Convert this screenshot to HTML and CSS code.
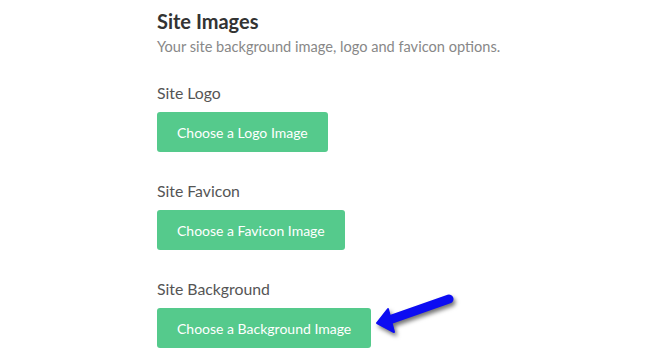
FILE: index.html
```html
<!DOCTYPE html>
<html lang="en">
<head>
    <meta charset="UTF-8">
    <meta name="viewport" content="width=device-width, initial-scale=1.0">
    <title>Site Images</title>
    <link rel="stylesheet" href="styles.css">
</head>
<body>
    <div class="panel">
        <h2>Site Images</h2>
        <p class="intro">Your site background image, logo and favicon options.</p>

        <div class="field">
            <label>Site Logo</label>
            <button class="btn">Choose a Logo Image</button>
        </div>

        <div class="field">
            <label>Site Favicon</label>
            <button class="btn">Choose a Favicon Image</button>
        </div>

        <div class="field">
            <label>Site Background</label>
            <div class="btn-row">
                <button class="btn">Choose a Background Image</button>
                <svg class="pointer" width="90" height="50" viewBox="0 0 90 50">
                    <line x1="22" y1="29" x2="79" y2="9" stroke="#0c0cf2" stroke-width="9" stroke-linecap="round"/>
                    <polygon points="7,33 18,19 24,42" fill="#0c0cf2" stroke="#0c0cf2" stroke-width="2" stroke-linejoin="round"/>
                </svg>
            </div>
        </div>
    </div>
</body>
</html>
```

FILE: styles.css
```css
body {
    margin: 0;
    font-family: Lato, 'Open Sans', sans-serif;
    background-color: #fff;
    color: #555;
}
.panel {
    padding: 8px 0 0 157px;
}
h2 {
    margin: 0;
    font-size: 20px;
    line-height: 26px;
    font-weight: bold;
    color: #333;
}
.intro {
    margin: 3px 0 0;
    font-size: 14.6px;
    line-height: 20px;
    color: #888;
}
.field {
    margin-top: 26px;
}
.field + .field {
    margin-top: 29px;
}
label {
    display: block;
    font-size: 15.8px;
    line-height: 20px;
    color: #555;
    margin-bottom: 9px;
}
.btn-row {
    position: relative;
    display: inline-block;
}
.btn {
    display: block;
    height: 40px;
    padding: 0 20px;
    border: none;
    border-radius: 3px;
    background-color: #55ca8c;
    color: #fff;
    font-family: inherit;
    font-size: 14px;
    cursor: pointer;
}
.pointer {
    position: absolute;
    left: 213px;
    top: -18px;
    filter: drop-shadow(2px 3px 2px rgba(0, 0, 0, 0.55));
}
```
